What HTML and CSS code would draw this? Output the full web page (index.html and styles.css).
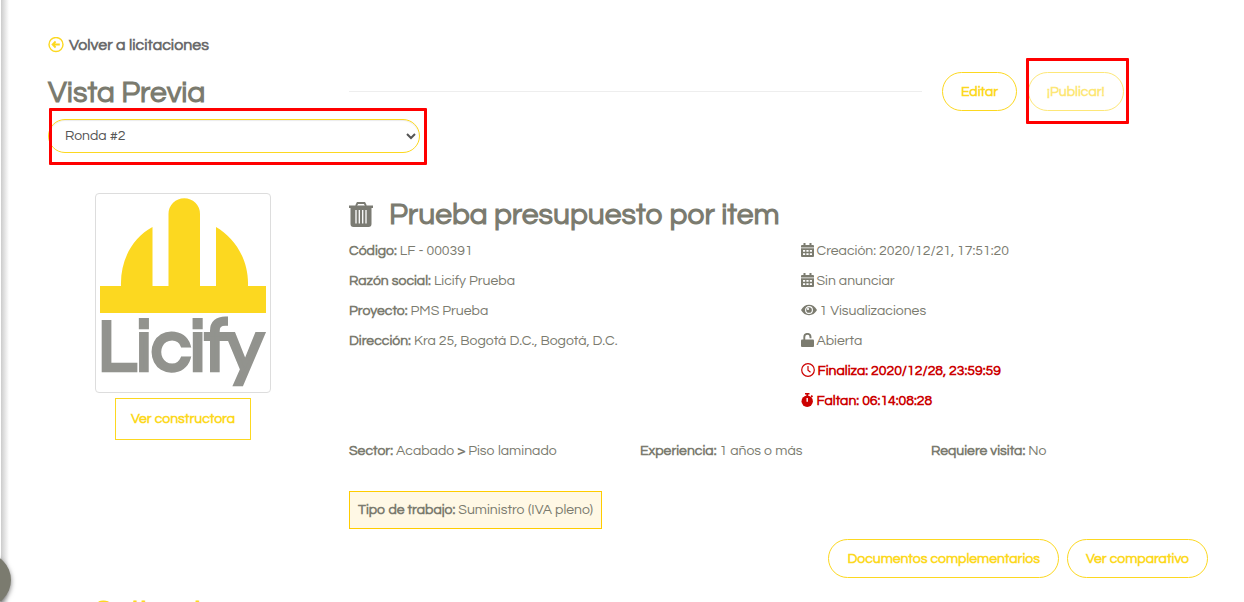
FILE: index.html
```html
<!doctype html>
<html lang="es">

<head>
    <meta charset="UTF-8">
    <meta name="viewport" content="width=device-width, initial-scale=1.0">
    <title>Vista Previa</title>
    <link rel="stylesheet" href="styles.css">
</head>

<body>
    <!-- Borde del menú lateral -->
    <div class="side-shadow"></div>
    <button class="side-toggle" aria-label="Abrir menú"></button>

    <main class="page">
        <a href="#" class="back-link">
            <svg class="icon-back" viewBox="0 0 16 16" aria-hidden="true">
                <circle cx="8" cy="7.500" r="7" fill="none" stroke="#fcd820" stroke-width="1.4" />
                <path d="M11.8 7.500H5M7.600 4.500L4.600 7.500l3 3" fill="none" stroke="#fcd820" stroke-width="1.800" />
            </svg>
            Volver a licitaciones
        </a>

        <!-- Encabezado -->
        <header class="header">
            <h1>Vista Previa</h1>
            <div class="header-right">
                <hr class="line">
                <div class="header-buttons">
                    <button class="btn">Editar</button>
                    <span class="marked marked-publish">
                        <button class="btn" disabled>¡Publicar!</button>
                    </span>
                </div>
            </div>
        </header>

        <div class="marked marked-round">
            <select class="round-select" aria-label="Ronda">
                <option>Ronda #2</option>
            </select>
        </div>

        <section class="tender">
            <!-- Constructora -->
            <div class="company">
                <div class="thumbnail">
                    <svg viewBox="0 0 166 190" role="img" aria-label="Licify">
                        <path d="M0 88H21C20 62 33 39 52.500 29V88H68.500V16a15.700 15.700 0 0 1 31.500 0V88H116V29C135 40 149 62 148 88H166V115H0z" fill="#fcd820" />
                        <text x="-2" y="172" class="logo-text">Licify</text>
                    </svg>
                </div>
                <button class="btn-square">Ver constructora</button>
            </div>

            <!-- Detalle de la licitación -->
            <div class="detail">
                <div class="tender-title">
                    <button class="trash" aria-label="Eliminar">
                        <svg viewBox="0 0 24 26" aria-hidden="true">
                            <path d="M7 4L8.500 1h7L17 4" fill="none" stroke="#7b7b73" stroke-width="1.800" />
                            <path d="M0 3.500h24V6h-1.500V22q0 3-3 3h-15q-3 0-3-3V6H0z" fill="#7b7b73" />
                            <path d="M7 8v13.500M10.300 8v13.500M13.700 8v13.500M17 8v13.500" stroke="#fff" stroke-width="1.300" />
                        </svg>
                    </button>
                    <h2>Prueba presupuesto por item</h2>
                </div>

                <div class="info">
                    <div>
                        <p><b>Código:</b> LF - 000391</p>
                        <p><b>Razón social:</b> Licify Prueba</p>
                        <p><b>Proyecto:</b> PMS Prueba</p>
                        <p><b>Dirección:</b> Kra 25, Bogotá D.C., Bogotá, D.C.</p>
                    </div>
                    <div>
                        <p>
                            <svg class="icon" viewBox="0 0 13 14" aria-hidden="true">
                                <path d="M2.500 0h2v2h4V0h2v2h1.500q1 0 1 1v1.500H0V3q0-1 1-1h1.500zM0 5.200h13V13q0 1-1 1H1q-1 0-1-1z" fill="#7b7b6f" />
                                <path d="M2 7h2.200v1.800H2zM5.400 7h2.200v1.800H5.400zM8.800 7H11v1.800H8.800zM2 10.200h2.200V12H2zM5.400 10.200h2.200V12H5.400zM8.800 10.200H11V12H8.800z" fill="#fff" />
                            </svg>
                            Creación: 2020/12/21, 17:51:20
                        </p>
                        <p>
                            <svg class="icon" viewBox="0 0 13 14" aria-hidden="true">
                                <path d="M2.500 0h2v2h4V0h2v2h1.500q1 0 1 1v1.500H0V3q0-1 1-1h1.500zM0 5.200h13V13q0 1-1 1H1q-1 0-1-1z" fill="#7b7b6f" />
                                <path d="M2 7h2.200v1.800H2zM5.400 7h2.200v1.800H5.400zM8.800 7H11v1.800H8.800zM2 10.200h2.200V12H2zM5.400 10.200h2.200V12H5.400zM8.800 10.200H11V12H8.800z" fill="#fff" />
                            </svg>
                            Sin anunciar
                        </p>
                        <p>
                            <svg class="icon icon-wide" viewBox="0 0 16 14" aria-hidden="true">
                                <path d="M0 7Q3 1.800 8 1.800T16 7Q13 12.200 8 12.200T0 7z" fill="#7b7b6f" />
                                <circle cx="8" cy="7" r="3.400" fill="none" stroke="#fff" stroke-width="1.100" />
                                <circle cx="7" cy="6" r="1.100" fill="#fff" />
                            </svg>
                            1 Visualizaciones
                        </p>
                        <p>
                            <svg class="icon" viewBox="0 0 13 14" aria-hidden="true">
                                <path d="M3.300 7V4a3.100 3.100 0 0 1 6.200 0v1.200" fill="none" stroke="#7b7b6f" stroke-width="1.900" />
                                <rect y="6.500" width="13" height="7.500" rx="1" fill="#7b7b6f" />
                            </svg>
                            Abierta
                        </p>
                        <p class="urgent">
                            <svg class="icon icon-clock" viewBox="0 0 14 14" aria-hidden="true">
                                <circle cx="7" cy="7" r="6.300" fill="none" stroke="#c00" stroke-width="1.200" />
                                <path d="M7 3v4.200l2.500 2" fill="none" stroke="#c00" stroke-width="1.200" />
                            </svg>
                            Finaliza: 2020/12/28, 23:59:59
                        </p>
                        <p class="urgent">
                            <svg class="icon" viewBox="0 0 13 14" aria-hidden="true">
                                <path d="M4 0h4.500v1.500H4zM5.400 1h1.800v2.500H5.400zM9.500 3.200l1.300-1.300 1.300 1.300-1.300 1.300z" fill="#c00" />
                                <circle cx="6.200" cy="8.300" r="5.700" fill="#c00" />
                                <path d="M6.200 5v3.800" stroke="#fff" stroke-width="1.400" />
                            </svg>
                            Faltan: 06:14:08:28
                        </p>
                    </div>
                </div>

                <div class="facts">
                    <p><b>Sector:</b> Acabado <b>&gt;</b> Piso laminado</p>
                    <p><b>Experiencia:</b> 1 años o más</p>
                    <p><b>Requiere visita:</b> No</p>
                </div>

                <p class="work-type"><b>Tipo de trabajo:</b> Suministro (IVA pleno)</p>

                <div class="actions">
                    <button class="btn">Documentos complementarios</button>
                    <button class="btn">Ver comparativo</button>
                </div>
            </div>
        </section>

        <!-- Siguiente sección -->
        <h3 class="next">Cotizaciones</h3>
    </main>
</body>

</html>
```

FILE: styles.css
```css
* {
    box-sizing: border-box;
}

body {
    margin: 0;
    height: 100vh;
    overflow: hidden;
    font-family: Questrial, Inter, sans-serif;
    font-size: 14px;
    font-weight: 400;
    line-height: 20px;
    color: #7b7b6f;
    background-color: #fff;
}

h1,
h2,
h3,
p {
    margin: 0;
}

b {
    font-weight: 700;
}

button {
    font-family: inherit;
    cursor: pointer;
}

/* Menú lateral */
.side-shadow {
    position: absolute;
    top: 0;
    bottom: 0;
    left: 1px;
    width: 8px;
    background: linear-gradient(to right, #ccc, #fff);
}

.side-toggle {
    position: absolute;
    top: 553px;
    left: -43px;
    width: 54px;
    height: 54px;
    border: none;
    border-radius: 50%;
    background-color: #7b7b6f;
    box-shadow: 0 2px 5px rgba(0, 0, 0, 0.5);
}

.page {
    padding: 35px 22px 0 48px;
}

.back-link {
    display: flex;
    align-items: center;
    gap: 5px;
    font-size: 16px;
    font-weight: 700;
    color: #6b6b6b;
    text-decoration: none;
}

.icon-back {
    width: 16px;
    height: 16px;
}

/* Encabezado */
.header {
    display: grid;
    grid-template-columns: 1fr 3fr;
    gap: 10px;
    align-items: end;
    margin-top: 17px;
}

h1,
h2,
h3 {
    font-size: 30px;
    font-weight: 700;
    line-height: 36px;
}

.header-right {
    display: flex;
    align-items: center;
    gap: 20px;
}

.line {
    flex: 1;
    margin: 0;
    border: none;
    border-top: 1px solid #eee;
}

.header-buttons {
    display: flex;
    gap: 11px;
    width: 280px;
}

.btn {
    height: 39px;
    padding: 0 18px;
    border: 1px solid #fcd820;
    border-radius: 20px;
    background-color: #fff;
    color: #fcd820;
    font-size: 14px;
    font-weight: 700;
}

.btn:disabled {
    opacity: 0.6;
}

/* Recuadros rojos */
.marked {
    position: relative;
}

.marked::after {
    content: "";
    position: absolute;
    border: 3px solid #f00;
    border-radius: 1px;
    pointer-events: none;
}

.marked-publish::after {
    inset: -14px -5px -13px -2px;
}

.marked-round {
    width: 372px;
    max-width: 100%;
    margin-top: 8px;
}

.marked-round::after {
    inset: -11px -7px -12px 1px;
}

.round-select {
    display: block;
    width: 100%;
    height: 34px;
    padding: 0 12px;
    border: 1px solid #fcd820;
    border-radius: 17px;
    background-color: #fff;
    box-shadow: inset 0 1px 1px rgba(0, 0, 0, 0.08);
    color: #555;
    font-family: inherit;
    font-size: 14px;
}

/* Licitación */
.tender {
    display: grid;
    grid-template-columns: 1fr 3fr;
    gap: 10px;
    margin-top: 40px;
}

.company {
    display: flex;
    flex-direction: column;
    align-items: center;
    gap: 5px;
    padding-right: 21px;
}

.thumbnail {
    width: 176px;
    height: 200px;
    padding: 4px;
    border: 1px solid #ddd;
    border-radius: 4px;
}

.thumbnail svg {
    display: block;
    width: 166px;
    height: 190px;
}

.logo-text {
    font-size: 72px;
    font-weight: 700;
    fill: #92938e;
    stroke: #92938e;
    stroke-width: 2px;
}

.btn-square {
    height: 42px;
    padding: 0 15px;
    border: 1px solid #fcd820;
    background-color: #fff;
    color: #fcd820;
    font-size: 14px;
    font-weight: 700;
}

.tender-title {
    display: flex;
    align-items: center;
    gap: 16px;
    height: 43px;
}

.trash {
    width: 24px;
    height: 26px;
    padding: 0;
    border: none;
    background: none;
}

.trash svg {
    display: block;
}

.info {
    display: grid;
    grid-template-columns: 1fr 1fr;
    gap: 30px;
}

.info p {
    height: 30px;
    line-height: 30px;
}

.icon {
    width: 13px;
    height: 14px;
    vertical-align: -2px;
}

.icon-wide {
    width: 16px;
}

.icon-clock {
    width: 14px;
}

.urgent {
    color: #c00;
    font-weight: 700;
}

.facts {
    display: grid;
    grid-template-columns: repeat(3, 1fr);
    margin-top: 25px;
}

.work-type {
    width: fit-content;
    margin-top: 30px;
    padding: 8px;
    border: 1px solid #fc0;
    background-color: #fff8e5;
}

.actions {
    display: flex;
    justify-content: flex-end;
    gap: 8px;
    margin-top: 10px;
    padding-right: 14px;
}

.next {
    margin-top: 16px;
    padding-left: 45px;
    color: #fcd820;
}
```
